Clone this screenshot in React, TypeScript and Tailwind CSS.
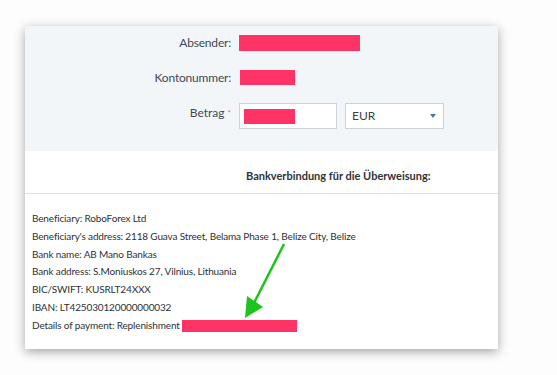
const Redact = ({ className }: { className: string }) => (
  <div className={`bg-[#ff3366] ${className}`} />
);

const lines = [
  'Beneficiary: RoboForex Ltd',
  "Beneficiary's address: 2118 Guava Street, Belama Phase 1, Belize City, Belize",
  'Bank name: AB Mano Bankas',
  'Bank address: S.Moniuskos 27, Vilnius, Lithuania',
  'BIC/SWIFT: KUSRLT24XXX',
  'IBAN: LT425030120000000032',
];

const App = () => {
  return (
    <div className="w-[557px] h-[375px] bg-[#fdfdfd] pt-[26px] pl-[25px] font-['Lato',sans-serif]">
      <div className="relative w-[473px] bg-white shadow-[0_3px_10px_rgba(0,0,0,0.35)]">
        {/* form */}
        <div className="bg-[#f3f6f9] h-[125px] pt-[9px] flex flex-col">
          <div className="flex items-center h-[16px]">
            <div className="w-[206px] text-right text-[12px] text-[#414a54] tracking-[-0.2px]">Absender:</div>
            <Redact className="ml-[8px] w-[121px] h-[16px]" />
          </div>
          <div className="flex items-center h-[15px] mt-[19px]">
            <div className="w-[206px] text-right text-[12px] text-[#414a54] tracking-[-0.2px]">Kontonummer:</div>
            <Redact className="ml-[9px] w-[55px] h-[15px]" />
          </div>
          <div className="flex items-start h-[26px] mt-[18px]">
            <div className="w-[206px] text-right text-[12px] text-[#414a54] pt-[2px] leading-[16px]">
              Betrag <span className="text-[#e0607a] text-[8px] align-top">*</span>
            </div>
            <div className="ml-[8px] w-[98px] h-[26px] bg-white border border-[#cdd3d9] flex items-center pl-[4px]">
              <Redact className="w-[51px] h-[15px]" />
            </div>
            <div className="ml-[8px] w-[99px] h-[26px] bg-white border border-[#cdd3d9] flex items-center justify-between pl-[6px] pr-[7px]">
              <span className="text-[12px] text-[#3a4048]">EUR</span>
              <svg width="6" height="4" viewBox="0 0 6 4">
                <path d="M0 0 L6 0 L3 4 Z" fill="#3f7aa6" />
              </svg>
            </div>
          </div>
        </div>

        {/* bank details */}
        <div className="border-b border-[#dde3e8] pt-[18px] pb-[10px] pl-[221px]">
          <div className="text-[11px] font-bold text-[#2f3338] leading-[14px]">
            Bankverbindung für die Überweisung:
          </div>
        </div>
        <div className="pt-[16px] pb-[14px] pl-[7px] text-[10px] tracking-[-0.15px] leading-[17.8px] text-[#2d3136]">
          {lines.map((l) => (
            <div key={l}>{l}</div>
          ))}
          <div className="flex items-center">
            <span>Details of payment: Replenishment</span>
            <Redact className="ml-[2px] w-[115px] h-[12px]" />
          </div>
        </div>

        {/* annotation arrow */}
        <svg className="absolute left-0 top-0 pointer-events-none" width="473" height="323">
          <line x1="259" y1="218" x2="229" y2="277" stroke="#1ec41e" strokeWidth="2.5" />
          <path d="M220 292 L222 270 L238 281 Z" fill="#1ec41e" />
        </svg>
      </div>
    </div>
  );
};

export default App;
